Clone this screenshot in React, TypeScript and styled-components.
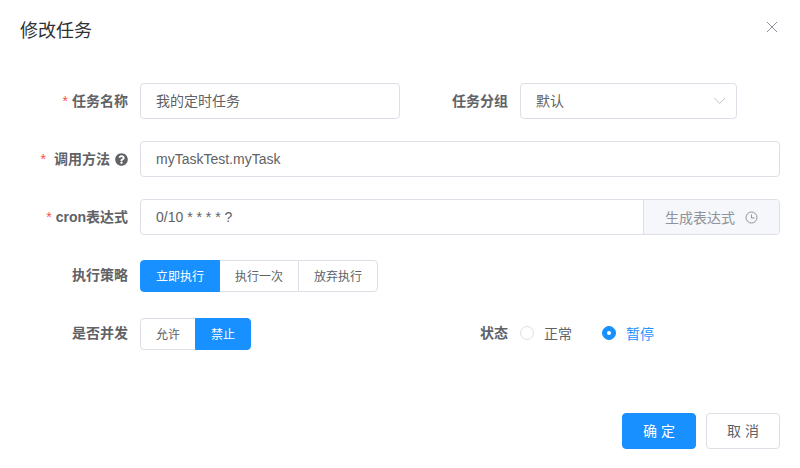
import React from "react";
import styled, { createGlobalStyle } from "styled-components";
import { FaQuestionCircle } from "react-icons/fa";

const Global = createGlobalStyle`
  html, body { margin: 0; padding: 0; background: #fff; }
  * { box-sizing: border-box; }
  body { font-family: "Liberation Sans", "Noto Sans CJK SC", sans-serif; color: #606266; font-size: 14px; }
`;

const Dialog = styled.div`
  position: relative;
  width: 800px;
  height: 468px;
  padding: 19px 20px 0;
  background: #fff;
  overflow: hidden;
`;
const Title = styled.h2`
  margin: 0;
  font-size: 18px;
  font-weight: 400;
  line-height: 24px;
  color: #303133;
`;
const Close = styled.button`
  position: absolute;
  top: 21px;
  right: 22px;
  width: 12px;
  height: 12px;
  padding: 0;
  border: 0;
  background: none;
  display: block;
  color: #909399;
  svg { display: block; }
`;
const Form = styled.form`
  margin-top: 40px;
  display: flex;
  flex-direction: column;
  gap: 22px;
`;
const Row = styled.div`
  display: flex;
  height: 36px;
`;
const Col = styled.div<{ $width?: number }>`
  display: flex;
  width: ${p => (p.$width ? `${p.$width}px` : "auto")};
  flex: ${p => (p.$width ? "none" : "1")};
  min-width: 0;
`;
const Label = styled.label<{ $width: number }>`
  flex: none;
  width: ${p => p.$width}px;
  padding-right: 12px;
  display: flex;
  justify-content: flex-end;
  align-items: center;
  font-weight: 700;
  font-size: 14px;
  line-height: 36px;
  color: #606266;
`;
const Star = styled.span<{ $gap: number }>`
  color: #ff4d4f;
  font-weight: 400;
  margin-right: ${p => p.$gap}px;
`;
const HelpIcon = styled(FaQuestionCircle)`
  margin-left: 5px;
  width: 13px;
  height: 13px;
  color: #606266;
`;
const Field = styled.div<{ $width?: number; $cjk?: boolean }>`
  position: relative;
  display: flex;
  align-items: center;
  height: 36px;
  width: ${p => (p.$width ? `${p.$width}px` : "auto")};
  flex: ${p => (p.$width ? "none" : "1")};
  padding: 0 15px ${p => (p.$cjk ? "2px" : "0")};
  border: 1px solid #dcdfe6;
  border-radius: 4px;
  color: #606266;
  font-size: 14px;
  background: #fff;
`;
const Arrow = styled.svg`
  position: absolute;
  right: 10px;
  top: 12px;
  color: #c0c4cc;
`;
const AppendField = styled.div`
  flex: 1;
  display: flex;
  height: 36px;
  border: 1px solid #dcdfe6;
  border-radius: 4px;
  overflow: hidden;
`;
const AppendInput = styled.div`
  flex: 1;
  display: flex;
  align-items: center;
  padding: 0 15px;
  color: #606266;
`;
const Append = styled.div`
  flex: none;
  width: 136px;
  display: flex;
  align-items: center;
  padding-left: 21px;
  gap: 10px;
  background: #f5f7fa;
  border-left: 1px solid #dcdfe6;
  color: #909399;
`;
const Group = styled.div`
  display: flex;
  height: 32px;
  margin-top: 3px;
`;
const GroupButton = styled.button<{ $active?: boolean }>`
  height: 32px;
  padding: 0 15px 2px;
  margin-left: -1px;
  font: inherit;
  font-size: 12px;
  border: 1px solid ${p => (p.$active ? "#1890ff" : "#dcdfe6")};
  background: ${p => (p.$active ? "#1890ff" : "#fff")};
  color: ${p => (p.$active ? "#fff" : "#606266")};
  position: relative;
  z-index: ${p => (p.$active ? 1 : 0)};
  &:first-child { margin-left: 0; border-radius: 4px 0 0 4px; }
  &:last-child { border-radius: 0 4px 4px 0; }
`;
const RadioGroup = styled.div`
  display: flex;
  align-items: center;
  gap: 30px;
`;
const Radio = styled.span<{ $checked?: boolean }>`
  display: inline-flex;
  align-items: center;
  gap: 10px;
  color: ${p => (p.$checked ? "#1890ff" : "#606266")};
  font-size: 14px;
  font-weight: 400;
`;
const Dot = styled.i<{ $checked?: boolean }>`
  display: flex;
  align-items: center;
  justify-content: center;
  width: 14px;
  height: 14px;
  border-radius: 50%;
  border: 1px solid ${p => (p.$checked ? "#1890ff" : "#dcdfe6")};
  background: ${p => (p.$checked ? "#1890ff" : "#fff")};
  &::after {
    content: "";
    width: 4px;
    height: 4px;
    border-radius: 50%;
    background: #fff;
    display: ${p => (p.$checked ? "block" : "none")};
  }
`;
const Footer = styled.div`
  margin-top: 62px;
  display: flex;
  justify-content: flex-end;
  gap: 10px;
`;
const FootButton = styled.button<{ $primary?: boolean }>`
  width: 74px;
  height: 36px;
  padding: 0 0 2px;
  font: inherit;
  font-size: 14px;
  border-radius: 4px;
  border: 1px solid ${p => (p.$primary ? "#1890ff" : "#dcdfe6")};
  background: ${p => (p.$primary ? "#1890ff" : "#fff")};
  color: ${p => (p.$primary ? "#fff" : "#606266")};
`;

export default function App() {
  return (
    <>
      <Global />
      <Dialog>
        <Title>修改任务</Title>
        <Close aria-label="关闭">
          <svg width="12" height="12" viewBox="0 0 12 12" fill="none" stroke="currentColor" strokeWidth="1">
            <path d="M1 1l10 10M11 1L1 11" />
          </svg>
        </Close>
        <Form>
          <Row>
            <Col $width={380}>
              <Label $width={120}><Star $gap={4}>*</Star>任务名称</Label>
              <Field $cjk>我的定时任务</Field>
            </Col>
            <Col>
              <Label $width={120}>任务分组</Label>
              <Field $width={217} $cjk>
                默认
                <Arrow width="12" height="10" viewBox="0 0 12 10" fill="none" stroke="currentColor" strokeWidth="1">
                  <path d="M.5 2l5.2 5.5 5.2-5.5" />
                </Arrow>
              </Field>
            </Col>
          </Row>
          <Row>
            <Label $width={120}>
              <Star $gap={8}>*</Star>调用方法<HelpIcon />
            </Label>
            <Field>myTaskTest.myTask</Field>
          </Row>
          <Row>
            <Label $width={120}><Star $gap={4}>*</Star>cron表达式</Label>
            <AppendField>
              <AppendInput>0/10 * * * * ?</AppendInput>
              <Append>
                生成表达式
                <svg width="13" height="13" viewBox="0 0 13 13" fill="none" stroke="currentColor" strokeWidth="1">
                  <circle cx="6.5" cy="6.5" r="5.5" />
                  <path d="M6.5 3.5v3.5h3" />
                </svg>
              </Append>
            </AppendField>
          </Row>
          <Row>
            <Label $width={120}>执行策略</Label>
            <Group>
              <GroupButton type="button" $active>立即执行</GroupButton>
              <GroupButton type="button">执行一次</GroupButton>
              <GroupButton type="button">放弃执行</GroupButton>
            </Group>
          </Row>
          <Row>
            <Col $width={380}>
              <Label $width={120}>是否并发</Label>
              <Group>
                <GroupButton type="button">允许</GroupButton>
                <GroupButton type="button" $active>禁止</GroupButton>
              </Group>
            </Col>
            <Col>
              <Label $width={120}>状态</Label>
              <RadioGroup>
                <Radio><Dot />正常</Radio>
                <Radio $checked><Dot $checked />暂停</Radio>
              </RadioGroup>
            </Col>
          </Row>
        </Form>
        <Footer>
          <FootButton type="button" $primary>确 定</FootButton>
          <FootButton type="button">取 消</FootButton>
        </Footer>
      </Dialog>
    </>
  );
}
